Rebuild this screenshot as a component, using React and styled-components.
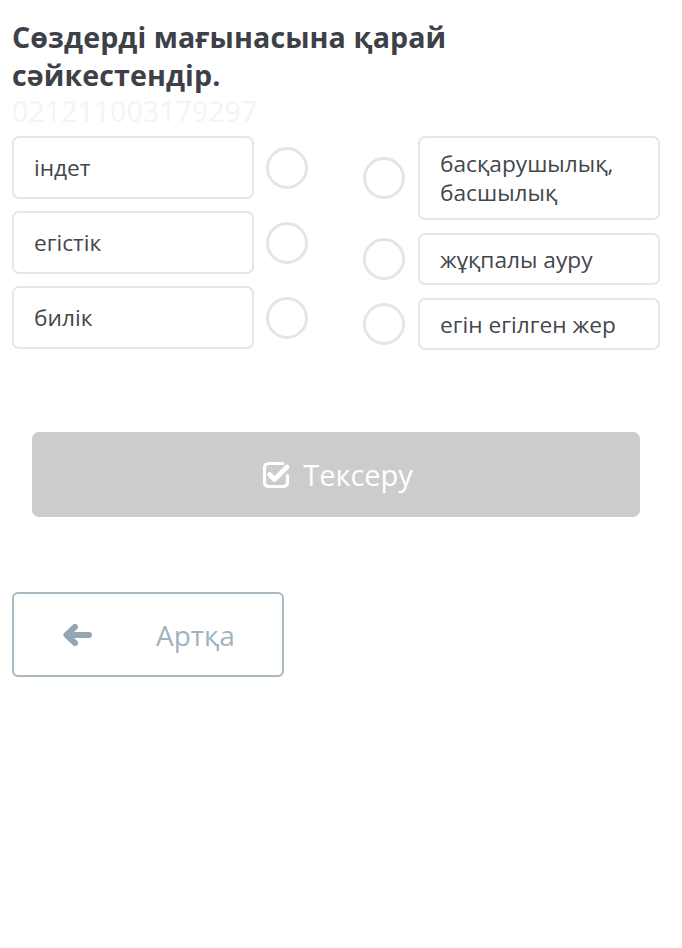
import React from 'react';
import styled, { createGlobalStyle } from 'styled-components';

const GlobalStyle = createGlobalStyle`
  body {
    margin: 0;
    background: #ffffff;
    font-family: "Open Sans", "Noto Sans", sans-serif;
  }
`;

const Page = styled.div`
  padding: 18px 22px 40px 12px;
`;

const Title = styled.h1`
  margin: 0;
  max-width: 460px;
  font-size: 28.6px;
  line-height: 38px;
  font-weight: 700;
  color: #3d4147;
  letter-spacing: 0.1px;
`;

const Code = styled.div`
  font-size: 28.6px;
  line-height: 34px;
  color: #f3f4f5;
`;

const Match = styled.div`
  display: flex;
  justify-content: space-between;
  margin-top: 8px;
`;

const Column = styled.div`
  display: flex;
  flex-direction: column;
  gap: ${p => p.$gap}px;
`;

const Row = styled.div`
  display: flex;
  align-items: center;
  gap: ${p => p.$gap}px;
`;

const Card = styled.div`
  box-sizing: border-box;
  width: 242px;
  min-height: ${p => p.$h}px;
  padding: 0 18px 0 20px;
  display: flex;
  align-items: center;
  border: 2px solid #e4e6e8;
  border-radius: 7px;
  font-size: 22.7px;
  line-height: 29px;
  color: #43474c;
`;

const Dot = styled.div`
  box-sizing: border-box;
  width: 42px;
  height: 42px;
  border-radius: 50%;
  border: 3px solid #e3e6e8;
  flex-shrink: 0;
`;

const CheckButton = styled.button`
  box-sizing: border-box;
  display: flex;
  align-items: center;
  justify-content: center;
  gap: 12px;
  width: 608px;
  height: 85px;
  margin: 82px 0 0 20px;
  border: none;
  border-radius: 7px;
  background: #cccccc;
  color: #ffffff;
  font-family: inherit;
  font-size: 29px;
  padding: 0 0 0 2px;
`;

const BackButton = styled.button`
  box-sizing: border-box;
  display: flex;
  align-items: center;
  width: 272px;
  height: 85px;
  margin-top: 75px;
  padding: 0 0 0 48px;
  gap: 64px;
  background: #ffffff;
  border: 2px solid #a9b9c3;
  border-radius: 6px;
  color: #a3b3bd;
  font-family: inherit;
  font-size: 28px;
`;

const CheckIcon = () => (
  <svg width="30" height="30" viewBox="0 0 30 30" fill="none">
    <path
      d="M22 3.5H7.5a4 4 0 0 0-4 4v15a4 4 0 0 0 4 4h15a4 4 0 0 0 4-4v-7"
      stroke="#fff" strokeWidth="3.2" strokeLinecap="round"
    />
    <path
      d="M8.5 14.5l5 5L26 7"
      stroke="#fff" strokeWidth="4.6" strokeLinecap="round" strokeLinejoin="round"
    />
  </svg>
);

const ArrowIcon = () => (
  <svg width="30" height="24" viewBox="0 0 30 24" fill="none">
    <path
      d="M27 12H6M13 4L4.5 12L13 20"
      stroke="#93a7b3" strokeWidth="6" strokeLinecap="round" strokeLinejoin="round"
    />
  </svg>
);

const left = ['індет', 'егістік', 'билік'];
const right = [
  { text: 'басқарушылық, басшылық', h: 84 },
  { text: 'жұқпалы ауру', h: 52 },
  { text: 'егін егілген жер', h: 52 },
];

export default function App() {
  return (
    <Page>
      <GlobalStyle />
      <Title>Сөздерді мағынасына қарай сәйкестендір.</Title>
      <Code>021211003179297</Code>
      <Match>
        <Column $gap={12}>
          {left.map(t => (
            <Row key={t} $gap={12}>
              <Card $h={63}>{t}</Card>
              <Dot />
            </Row>
          ))}
        </Column>
        <Column $gap={13}>
          {right.map(r => (
            <Row key={r.text} $gap={13}>
              <Dot />
              <Card $h={r.h}>{r.text}</Card>
            </Row>
          ))}
        </Column>
      </Match>
      <CheckButton>
        <CheckIcon />
        Тексеру
      </CheckButton>
      <BackButton>
        <ArrowIcon />
        Артқа
      </BackButton>
    </Page>
  );
}
